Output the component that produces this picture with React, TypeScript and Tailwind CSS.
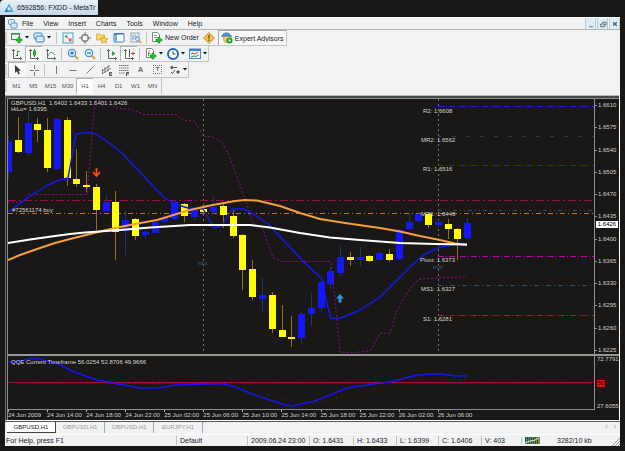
import type { ReactNode } from "react";

// [colour, bodyTop, bodyBottom, high, low]
type Candle = ["b" | "y", number, number, number, number];

const candles: Candle[] = [
  ["b", 141, 172, 136, 179],
  ["y", 140, 152, 117, 153],
  ["b", 123, 153, 112, 156],
  ["y", 124, 130, 118, 142],
  ["y", 130, 168, 118, 172],
  ["b", 119, 169, 118, 170],
  ["y", 120, 178, 117, 186],
  ["y", 179, 184, 149, 187],
  ["y", 185, 187, 171, 192],
  ["y", 187, 210, 184, 230],
  ["b", 202, 211, 194, 211],
  ["y", 202, 232, 191, 260],
  ["b", 220, 231, 211, 255],
  ["y", 219, 236, 218, 240],
  ["b", 232, 235, 230, 239],
  ["b", 222, 233, 220, 233],
  ["b", 217, 222, 215, 223],
  ["b", 202, 219, 200, 220],
  ["y", 204, 216, 203, 222],
  ["b", 208, 217, 207, 220],
  ["y", 209, 212, 204, 214],
  ["b", 207, 212, 197, 214],
  ["y", 206, 215, 204, 228],
  ["y", 216, 236, 210, 238],
  ["y", 235, 270, 234, 290],
  ["y", 269, 297, 260, 300],
  ["b", 295, 299, 278, 313],
  ["y", 295, 329, 292, 333],
  ["y", 330, 337, 305, 337],
  ["y", 337, 339, 316, 347],
  ["b", 314, 338, 312, 344],
  ["b", 308, 314, 293, 326],
  ["b", 282, 308, 281, 313],
  ["b", 271, 284, 267, 289],
  ["b", 257, 273, 246, 277],
  ["y", 257, 260, 252, 266],
  ["b", 257, 260, 247, 266],
  ["y", 256, 261, 255, 262],
  ["b", 253, 260, 252, 261],
  ["y", 254, 260, 249, 262],
  ["b", 230, 259, 229, 260],
  ["b", 222, 229, 213, 230],
  ["b", 214, 221, 212, 222],
  ["y", 214, 225, 213, 228],
  ["b", 222, 225, 220, 227],
  ["y", 224, 229, 219, 239],
  ["y", 229, 239, 228, 260],
  ["b", 223, 238, 218, 239],
];

const levels = [
  { label: "R2: 1.6608", x: 423, y: 113, line: 106, color: "#1c1cf0", dash: "6 2 1 2" },
  { label: "MR2: 1.6562", x: 421, y: 142, line: 136, color: "#1f3c54", dash: "4 10" },
  { label: "R1: 1.6516", x: 423, y: 171, line: 165, color: "#1c1cf0", dash: "6 2 1 2" },
  { label: "MR1: 1.6446", x: 421, y: 216, line: 210, color: "#24506e", dash: "4 3 1 3 1 3" },
  { label: "Pivot: 1.6373", x: 420, y: 262, line: 256, color: "#c000b0", dash: "6 2 1 2" },
  { label: "MS1: 1.6327", x: 421, y: 291, line: 285, color: "#245070", dash: "5 3 1 3" },
  { label: "S1: 1.6281", x: 423, y: 321, line: 315, color: "#902c08", dash: "6 2 1 2" },
];

const prices = [
  "1.6610", "1.6575", "1.6540", "1.6505", "1.6470", "1.6435",
  "1.6400", "1.6365", "1.6330", "1.6295", "1.6260", "1.6225",
];

const times = [
  "24 Jun 2009", "24 Jun 14:00", "24 Jun 18:00", "24 Jun 22:00",
  "25 Jun 02:00", "25 Jun 06:00", "25 Jun 10:00", "25 Jun 14:00",
  "25 Jun 18:00", "25 Jun 22:00", "26 Jun 02:00", "26 Jun 06:00",
];

const menus = ["File", "View", "Insert", "Charts", "Tools", "Window", "Help"];
const frames = ["M1", "M5", "M15", "M30", "H1", "H4", "D1", "W1", "MN"];
const tabs = ["GBPUSD,H1", "GBPUSD,H1", "GBPUSD,H1", "EURJPY,H1"];

function Icon({ children }: { children: ReactNode }) {
  return (
    <svg className="w-3 h-3 shrink-0" viewBox="0 0 12 12" fill="none">
      {children}
    </svg>
  );
}

function Plus({ x, y }: { x: number; y: number }) {
  return (
    <path
      d={`M${x - 3} ${y - 1}h2v-2h2v2h2v2h-2v2h-2v-2h-2z`}
      fill="#22c41e"
      stroke="#0b8a12"
      strokeWidth="0.5"
    />
  );
}

function Axes() {
  return <path d="M2.500 1v9.500h8.500M1 2.500h3M9.500 9v3" stroke="#5f6a66" />;
}

function Tool({ label, pressed, menu, children }: {
  label: string;
  pressed?: boolean;
  menu?: boolean;
  children: ReactNode;
}) {
  return (
    <button
      aria-label={label}
      className={`flex items-center h-full shrink-0 ${menu ? "w-[22px] pl-[3px] gap-0.5" : "w-[17px] justify-center"} ${pressed ? "bg-[#fbfbfc] border-t border-l border-[#b4b4b0]" : ""}`}
    >
      <Icon>{children}</Icon>
      {menu && (
        <svg className="w-1 h-[3px] shrink-0" viewBox="0 0 4 3">
          <path d="M0 0h4L2 2.500z" fill="#111" />
        </svg>
      )}
    </button>
  );
}

function Sep() {
  return <span className="w-px h-3 mx-0.5 bg-[#c2c2be] shrink-0" />;
}

function Bar({ children }: { children: ReactNode }) {
  return (
    <div className="flex">
      <div className="flex items-center h-4 border-r border-b border-[#c4c6c0]">
        <span className="w-0.5 h-3 mr-px bg-[#cdcdc9] shrink-0" />
        {children}
      </div>
    </div>
  );
}

function StandardBar() {
  return (
    <Bar>
      <Tool label="New chart" menu>
        <rect x="0.500" y="1.500" width="8" height="6" fill="#eef6ff" stroke="#4c8058" />
        <path d="M1 2.500h7" stroke="#7fb58a" />
        <Plus x={8} y={8} />
      </Tool>
      <Tool label="Profiles" menu>
        <rect x="1" y="1" width="8" height="6" rx="1" fill="#e3f0fc" stroke="#3f7fc4" />
        <rect x="3" y="4" width="8" height="6" rx="1" fill="#cfe4f8" stroke="#3f7fc4" />
        <path d="M4 8.500h6" stroke="#fff" />
      </Tool>
      <span className="w-0.5" />
      <Sep />
      <Tool label="Market Watch">
        <rect x="1" y="1" width="10" height="10" fill="#e8f6fc" stroke="#58a0bc" />
        <path d="M3 3.500h2.500v2H3z" fill="#24a04c" />
        <path d="M7 6.500h2.500v3H7z" fill="#e8503c" />
        <path d="M4.500 5l3.500 3" stroke="#e07050" />
      </Tool>
      <Tool label="Data Window">
        <circle cx="6" cy="6" r="3.300" stroke="#777" strokeWidth="1.300" />
        <path d="M6 0v4M6 8v4M0 6h4M8 6h4" stroke="#777" />
      </Tool>
      <Tool label="Navigator">
        <path d="M0.500 2h3l1 1h4v5h-8z" fill="#fbd568" stroke="#d8a028" strokeWidth="0.700" />
        <path d="M8 4l1.200 2.400 2.600.3-1.900 1.800.5 2.600L8 9.800l-2.400 1.300.5-2.600-1.900-1.800 2.600-.3z" fill="#ffd84a" stroke="#cc8f1c" strokeWidth="0.700" />
      </Tool>
      <Tool label="Terminal">
        <rect x="1" y="1.500" width="10" height="8.500" rx="0.500" fill="#fff" stroke="#3f88c8" />
        <rect x="1.500" y="2" width="2.500" height="8" fill="#6fb0e4" />
        <path d="M1 2h10" stroke="#2c6ba8" />
      </Tool>
      <Tool label="Strategy Tester">
        <rect x="1" y="1" width="8" height="9" fill="#eef3f8" stroke="#8fa8c0" />
        <path d="M3 3v5M5 2.500v4M7 4v3" stroke="#7f98b0" />
        <circle cx="7.500" cy="7" r="2" fill="#d8ecfa" stroke="#4c88b8" strokeWidth="0.800" />
        <path d="M9 8.500l2.500 2.500" stroke="#e0a028" strokeWidth="1.500" />
      </Tool>
      <Sep />
      <button className="flex items-center gap-0.5 pl-0.5 pr-0.5 h-full">
        <Icon>
          <path d="M1.500 0.500h5l2 2v7h-7z" fill="#fff" stroke="#7e8a84" />
          <path d="M3 3.500h3M3 5.500h4" stroke="#8b9690" />
          <Plus x={8} y={8} />
        </Icon>
        New Order
      </button>
      <Tool label="MetaEditor">
        <path d="M6 0.500L11.500 6 6 11.500 0.500 6z" fill="#f6c04a" stroke="#b98222" strokeWidth="0.800" />
        <path d="M6 3v3.500M6 7.500v1.500" stroke="#5a4212" strokeWidth="1.300" />
      </Tool>
      <button className="flex items-center gap-0.5 pl-0.5 pr-[3px] h-full bg-[#f8f8f9] border-t border-l border-[#a8a8a4]">
        <Icon>
          <path d="M2 4.500h8v3.500l-3 3-4-1.500z" fill="#f0c47c" stroke="#c08c44" strokeWidth="0.600" />
          <path d="M0.500 4.500C2 1 5 0 8 1.500l3 3c-3-.8-7-.8-10.500 0z" fill="#4e94cc" stroke="#2e6ca4" strokeWidth="0.600" />
          <circle cx="8.500" cy="8.500" r="3" fill="#18a820" />
          <path d="M7.700 7v3l2.300-1.500z" fill="#fff" />
        </Icon>
        Expert Advisors
      </button>
    </Bar>
  );
}

function ChartsBar() {
  return (
    <Bar>
      <Tool label="Bar chart">
        <Axes />
        <path d="M5 7.500h2M6.500 3v5M6.500 3.500h2" stroke="#18a030" />
      </Tool>
      <Tool label="Candlesticks" pressed>
        <Axes />
        <path d="M6.500 1v8" stroke="#0f8a20" />
        <rect x="5" y="2.500" width="3" height="5" fill="#22b830" />
      </Tool>
      <Tool label="Line chart">
        <Axes />
        <path d="M3 8c1-4 4-5 7-1" stroke="#5c9070" />
      </Tool>
      <Sep />
      <Tool label="Zoom in">
        <path d="M7.500 7.500l3.500 3.500" stroke="#dca428" strokeWidth="2" />
        <circle cx="5" cy="5" r="3.800" fill="#d4eafa" stroke="#3c84c4" />
        <path d="M3 5h4M5 3v4" stroke="#1e68b4" />
      </Tool>
      <Tool label="Zoom out">
        <path d="M7.500 7.500l3.500 3.500" stroke="#dca428" strokeWidth="2" />
        <circle cx="5" cy="5" r="3.800" fill="#d4eafa" stroke="#3c84c4" />
        <path d="M3 5h4" stroke="#1e68b4" />
      </Tool>
      <Sep />
      <Tool label="Auto scroll">
        <Axes />
        <path d="M6 3v5l3.500-2.500z" fill="#28a040" />
      </Tool>
      <Tool label="Chart shift" pressed>
        <Axes />
        <path d="M6.500 1v8" stroke="#3d5a88" />
        <path d="M8 5.500h4M10 3.500v4" stroke="#d43c20" />
      </Tool>
      <Sep />
      <Tool label="Indicators" menu>
        <path d="M1.500 0.500h5l2 2v7h-7z" fill="#fff" stroke="#7e8a84" />
        <path d="M5 3c-2-.5-1 2-1.500 5M3 5.500h2.500" stroke="#60706a" strokeWidth="0.800" />
        <Plus x={8} y={8} />
      </Tool>
      <Tool label="Periods" menu>
        <circle cx="6" cy="6" r="5" fill="#fff" stroke="#2468b4" strokeWidth="2" />
        <path d="M6 3v3h2.500" stroke="#444" />
      </Tool>
      <Tool label="Templates" menu>
        <rect x="0.500" y="1" width="11" height="9.500" fill="#e4f1fb" stroke="#4a88c0" />
        <path d="M1 2h10" stroke="#3c80c4" strokeWidth="2" />
        <path d="M2 6l2-1 2 1 3-2" stroke="#d05030" />
        <path d="M2 9l3-1 2 .5 3-2" stroke="#3c9a58" />
      </Tool>
    </Bar>
  );
}

function LineBar() {
  return (
    <Bar>
      <Tool label="Cursor" pressed>
        <path d="M4 1v8l2-1.800L7.300 10.500l1.500-.7L7.500 6.800H10z" fill="#3a3a3a" />
      </Tool>
      <Tool label="Crosshair">
        <path d="M6.500 1v4M6.500 8v4M2 6.500h4M7 6.500h4" stroke="#777" />
      </Tool>
      <Sep />
      <Tool label="Vertical line">
        <path d="M6.500 2v8" stroke="#777" />
      </Tool>
      <Tool label="Horizontal line">
        <path d="M2.500 6.500h7" stroke="#777" />
      </Tool>
      <Tool label="Trendline">
        <path d="M2.500 9.500l7-7" stroke="#777" />
      </Tool>
      <Tool label="Channel">
        <path d="M1 7l8-5.500M1 10l9-6M4 3v6M7 1.500v6M1.500 5v5" stroke="#666" strokeWidth="0.800" />
        <path d="M11 8.500H8.500v3H11M8.500 10H11" stroke="#333" strokeWidth="0.800" />
      </Tool>
      <Tool label="Fibonacci">
        <path d="M1 1.500h10M1 4h10M1 6.500h10M1 9h6" stroke="#777" strokeDasharray="1.500 0.500" />
        <path d="M11 8.500H8.500v3.500M8.500 10H11" stroke="#333" strokeWidth="0.800" />
      </Tool>
      <button className="w-[17px] font-bold text-[#666]">A</button>
      <button className="w-[17px] flex justify-center text-[#555]" aria-label="Text label">
        <span className="size-[9px] border border-dotted border-[#777] font-bold text-[6px] leading-[7px]">T</span>
      </button>
      <Tool label="Arrows" menu>
        <path d="M1 3.500l2-2 2 2-2 2zM7 8l2-2 2 2-2 2z" fill="#555" />
        <path d="M5 3.500h3M2 8l1.500 1.500L6 6" stroke="#555" />
      </Tool>
    </Bar>
  );
}

function PriceChart() {
  return (
    <svg className="block w-full h-auto" viewBox="8 99 586 255">
      <g strokeWidth="1" fill="none">
        <path d="M203.500 99v255M438.500 99v255" stroke="#6c747a" strokeDasharray="2 3" />
        <path d="M8 200.500h586" stroke="#a80848" strokeDasharray="8 3 2 3" />
        <path d="M8 213.500h586" stroke="#b87428" strokeDasharray="5 3 1 3" />
        {levels.map((l) => (
          <path key={l.label} d={`M438 ${l.line + 0.5}h156`} stroke={l.color} strokeDasharray={l.dash} />
        ))}
      </g>

      {candles.map(([c, top, bottom, high, low], i) => {
        const x = Math.round(8 + 9.77 * i);
        return (
          <g key={i} fill={c === "b" ? "#1418f8" : "#ffff00"}>
            <rect x={x} y={high} width="1" height={low - high} fill={c === "b" ? "#14386c" : "#947010"} />
            <rect x={x - 3} y={top} width="7" height={bottom - top} />
          </g>
        );
      })}

      <g fill="none" strokeLinejoin="round">
        <path
          stroke="#86108e"
          strokeDasharray="2 2"
          d="M8 202L22 202 28 194.500 87 194.500 90 160 93 120 96 99.500 108 103 116 108 130 109 144 114.500 176 114.500 183 120 194 121 199 128 203 136 213 137 222 142 230 158 240 185 248 208 252 222 263 229 268 245 273 257 281 261.500 331 261.500 335 300 340 352 350 353 370 351 380 333.500 390 333 397 310 409 290 418 279.500 435 278 460 277 467 275"
        />
        <path
          stroke="#1418f8"
          strokeWidth="1.400"
          d="M8 212L22 202 35 193 48 185 60 180 68 178 76 134 86 132.500 96 134 108 142 122 153 137 169 152 185 165 198 175 204 188 208 203 209 208 217 214 228 222 226 232 209 243 209 255 215 268 224 285 242 305 263 322 279 326 300 331 318.500 341 318 360 310 380 297 400 277 412 265 425 254 440 247 455 244.500 467 244"
        />
        <path
          stroke="#f4a03c"
          strokeWidth="2"
          d="M8 260L20 255 40 248 55 243 70 239 100 231.500 115 228 135 224 157 220 175 214.500 190 210 210 205.500 235 201 245 200 257 200.500 280 206 300 213 320 219 345 223 380 228 400 231.500 420 236 440 240 455 243.500 467 245"
        />
        <path
          stroke="#ffffff"
          strokeWidth="2"
          d="M8 243L30 239.500 55 236 70 234 85 232.500 120 230 150 227.500 190 225 250 225 270 227.500 300 233 330 237.500 360 240 400 243 435 244 467 244.500"
        />
      </g>

      <path d="M96.500 168v7M93 172l3.500 4 3.500-4" stroke="#ff4a10" strokeWidth="1.800" fill="none" />
      <path d="M340 294l4 4.500h-2.500v4h-3v-4H336z" fill="#3a90d8" />

      <g fill="#d4d4d4" className="text-[6px]">
        <text x="11" y="105">GBPUSD,H1&nbsp; 1.6402 1.6433 1.6401 1.6426</text>
        <text x="11" y="111">HiLo= 1.6395</text>
        <text x="12" y="212">#72561174 buy</text>
        {levels.map((l) => (
          <text key={l.label} x={l.x} y={l.y}>{l.label}</text>
        ))}
        <text x="198" y="265" fill="#2c5c84">slpt</text>
        <text x="433" y="269" fill="#2c5c84">bvd</text>
      </g>
    </svg>
  );
}

function QqeChart() {
  return (
    <svg className="block w-full h-auto" viewBox="8 356 586 53">
      <g fill="none">
        <path
          stroke="#64200c"
          strokeDasharray="1 4"
          d="M8 366L30 360 57 362 85 370 97 375 115 381 135 384 200 384 240 386 255 391 280 398 300 402 325 401 345 395 365 391 390 387 410 383 435 380 467 379"
        />
        <path d="M8 382.500h586" stroke="#5c0838" />
        <path d="M8 382.500h586" stroke="#c40850" strokeDasharray="2 1" />
        <path
          stroke="#1414f4"
          strokeWidth="1.500"
          d="M8 362L22 361 30 358.500 38 358.500 46 361 57 363 70 370 88 377 97 380 110 382 117 384 130 386 140 388 155 388 165 387 175 385 210 384 225 384 235 387 252 394 270 400 285 405 293 406 300 404 312 402 325 397 345 388.500 360 386 375 384 395 381 405 378 418 375 430 374 443 374 455 376 467 376"
        />
      </g>
      <text x="11" y="364" fill="#d4d4d4" className="text-[6px]">
        QQE Current Timeframe 56.0254 52.8706 49.9666
      </text>
    </svg>
  );
}

function ChartWindow() {
  return (
    <section className="bg-[#191816] text-[6px] leading-[7px] text-[#d0d0d0] border-t border-l border-r border-t-[#b4b4b0] border-l-[#6c7074] border-r-white border-b border-b-white">
      <div className="h-0.5 bg-[#44484a]" />
      <div className="ml-px border-t border-l border-[#8a8e8e]">
        <div className="flex">
          <div className="flex-1 min-w-0 border-r border-[#8a8e8e]">
            <PriceChart />
          </div>
          <div className="relative w-6 flex flex-col justify-between pt-[3px]">
            {prices.map((p) => (
              <div key={p} className="flex items-center gap-px">
                <span className="w-0.5 h-px bg-[#8a8e8e]" />
                {p}
              </div>
            ))}
            <span className="absolute top-[49%] left-px right-px mt-[-3px] bg-white text-black text-center">
              1.6426
            </span>
          </div>
        </div>
        <div className="h-0.5 bg-[#969894]" />
        <div className="flex">
          <div className="flex-1 min-w-0 border-r border-b border-[#8a8e8e]">
            <QqeChart />
          </div>
          <div className="w-6 flex flex-col justify-between pl-0.5">
            <span>72.7791</span>
            <span className="w-2 bg-[#f00808] text-black text-center">50</span>
            <span>27.6055</span>
          </div>
        </div>
        <div className="flex h-2.5">
          <div className="flex-1 min-w-0 grid grid-cols-15">
            {times.map((t) => (
              <div key={t} className="whitespace-nowrap">
                <div className="w-px h-0.5 bg-[#b0b0b0]" />
                {t}
              </div>
            ))}
          </div>
          <div className="w-[25px]" />
        </div>
      </div>
    </section>
  );
}

function StatusCell({ className, children }: { className: string; children: ReactNode }) {
  return <span className={`border-l border-[#c0c0bc] pl-[3px] whitespace-nowrap ${className}`}>{children}</span>;
}

export default function App() {
  return (
    <div className="min-h-screen bg-[#191816] font-['Liberation_Sans',Arial,sans-serif] text-[7px] leading-[9px] text-[#222]">
      <header className="flex items-center gap-[3px] w-[98px] h-[15px] pl-1 whitespace-nowrap rounded-tl bg-linear-to-b from-[#e8f1f9] to-[#c4d8ea]">
        <svg className="w-2.5 h-2.5 shrink-0" viewBox="0 0 10 10">
          <path d="M5 0.500l4.500 8.500h-9z" fill="#4ca4dc" />
          <path d="M5 3.500l2 3.500H3z" fill="#d8eefa" />
          <path d="M2.500 5l2 4h-4z" fill="#2c80c0" />
        </svg>
        6592856: FXDD - MetaTr
      </header>

      <main className="mt-0.5 mx-[5px] bg-[#f1f2f4]">
        <nav className="flex items-center h-[13px] border-b border-[#b0b4ac] border-t border-t-white">
          <svg className="w-2.5 h-2.5 ml-[3px] mr-[3px]" viewBox="0 0 10 10" fill="#d8ecfa" stroke="#5a98d0">
            <rect x="0.500" y="0.500" width="6" height="5" rx="1" />
            <rect x="3" y="4" width="6" height="5" rx="1" />
          </svg>
          <div className="flex flex-1 gap-2.5 pl-px">
            {menus.map((m) => (
              <button key={m}>{m}</button>
            ))}
          </div>
          <div className="flex gap-px h-full">
            {["M3 8.500h4", "M4.500 4.500v-1h4v3h-1M2.500 5.500h4v3h-4z", "M3 3.500l4 4M7 3.500l-4 4"].map((d, i) => (
              <button
                key={d}
                aria-label={["Minimize", "Restore", "Close"][i]}
                className="w-[11px] flex items-center justify-center bg-[#deedf3] border-x border-[#bccdd0]"
              >
                <svg className="w-2.5 h-2.5 shrink-0" viewBox="0 0 10 11" fill="none" stroke="#4c6878" strokeWidth={i === 2 ? 1.6 : 1}>
                  <path d={d} />
                </svg>
              </button>
            ))}
          </div>
        </nav>

        <div className="pb-px">
          <StandardBar />
          <ChartsBar />
          <LineBar />
          <div className="flex">
            <div className="flex items-center h-4 border-r border-[#c4c6c0] text-[6px] text-[#555]">
              <span className="w-0.5 h-3 mr-px bg-[#cdcdc9]" />
              {frames.map((f) => (
                <button
                  key={f}
                  className={`w-[17px] h-full ${f === "H1" ? "bg-[#fbfbfc] border-t border-l border-[#b4b4b0]" : ""}`}
                >
                  {f}
                </button>
              ))}
            </div>
          </div>
        </div>

        <ChartWindow />

        <div className="flex h-[13px] items-start text-[#999a96] border-t border-[#555]">
          {tabs.map((t, i) => (
            <button
              key={i}
              className={
                i === 0
                  ? "ml-0.5 w-[49px] h-[11px] text-[6px] bg-white text-[#222] border-r border-b border-[#444]"
                  : "w-[49px] h-[11px] text-[6px] border-r border-[#aaa]"
              }
            >
              {t}
            </button>
          ))}
          <div className="ml-auto flex gap-1.5 pr-1">
            <button aria-label="Scroll left">‹</button>
            <button aria-label="Scroll right">›</button>
          </div>
        </div>

        <footer className="relative flex items-center h-3 border-t border-white">
          <span className="flex-1 pl-px whitespace-nowrap">For Help, press F1</span>
          <StatusCell className="w-[71px]">Default</StatusCell>
          <StatusCell className="w-[62px]">2009.06.24 23:00</StatusCell>
          <StatusCell className="w-[44px]">O: 1.6431</StatusCell>
          <StatusCell className="w-[43px]">H: 1.6433</StatusCell>
          <StatusCell className="w-[42px]">L: 1.6399</StatusCell>
          <StatusCell className="w-[43px]">C: 1.6406</StatusCell>
          <StatusCell className="w-[40px]">V: 403</StatusCell>
          <StatusCell className="w-[28px]">
            <svg className="w-[15px] h-[7px]" viewBox="0 0 15 7">
              <path d="M0 0h15v7H0z" fill="#7c8c2c" />
              <path d="M0.500 0v7M2.500 0v7M4.500 0v7M6.500 0v7M8.500 0v7M10.500 0v7M12.500 0v7" stroke="#1c5068" />
              <path d="M0 6l5-2 4-.5 5-2.500" stroke="#e8f0d0" fill="none" />
            </svg>
          </StatusCell>
          <span className="w-[71px] pl-2 whitespace-nowrap">3282/10 kb</span>
          <svg className="absolute right-0 bottom-0 w-2 h-2" viewBox="0 0 8 8" stroke="#999">
            <path d="M0 8l8-8M3 8l5-5M6 8l2-2" />
          </svg>
        </footer>
      </main>
    </div>
  );
}
